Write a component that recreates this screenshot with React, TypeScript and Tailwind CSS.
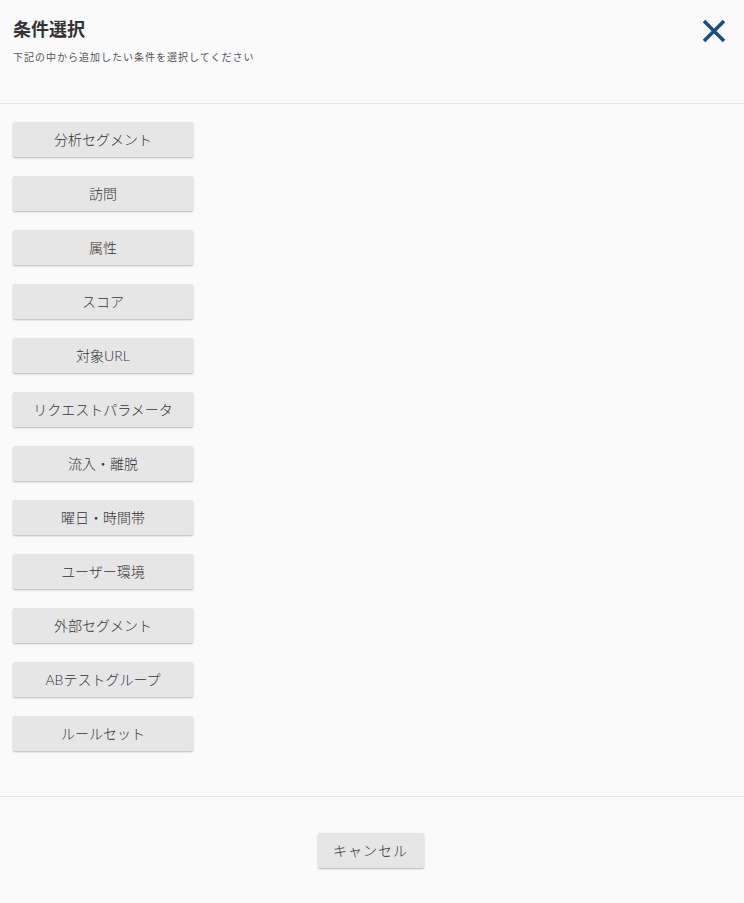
import React from "react";

const conditions = [
  "分析セグメント",
  "訪問",
  "属性",
  "スコア",
  "対象URL",
  "リクエストパラメータ",
  "流入・離脱",
  "曜日・時間帯",
  "ユーザー環境",
  "外部セグメント",
  "ABテストグループ",
  "ルールセット",
];

function GrayButton({ label, className }: { label: string; className?: string }) {
  return (
    <button
      type="button"
      className={
        "h-[35px] bg-[#e6e6e6] text-[14px] font-light text-[#333] rounded-[2px] shadow-[0_1px_2px_rgba(0,0,0,0.28)] " +
        (className ?? "")
      }
    >
      {label}
    </button>
  );
}

export default function App() {
  return (
    <div
      className="min-h-[903px] bg-[#fafafa] text-[#333]"
      style={{ fontFamily: 'Lato, "Noto Sans CJK JP", sans-serif' }}
    >
      {/* ヘッダー */}
      <div className="relative h-[104px] border-b border-[#e3e3e3] px-[13px] pt-[16px]">
        <h2 className="text-[18px] font-bold leading-[26px] text-[#333]">条件選択</h2>
        <p className="mt-[8px] text-[10px] leading-[14px] tracking-[1px] text-[#555]">
          下記の中から追加したい条件を選択してください
        </p>
        <button type="button" className="absolute right-[17px] top-[18px] h-[26px] w-[26px]">
          <svg viewBox="0 0 26 26" className="h-[26px] w-[26px]">
            <path d="M3 3 L23 23 M23 3 L3 23" stroke="#1c4e80" strokeWidth="3.6" strokeLinecap="butt" />
          </svg>
        </button>
      </div>

      {/* 条件一覧 */}
      <div className="flex h-[693px] flex-col gap-[19px] border-b border-[#e3e3e3] px-[13px] pt-[18px]">
        {conditions.map((c) => (
          <GrayButton key={c} label={c} className="w-[180px]" />
        ))}
      </div>

      {/* フッター */}
      <div className="flex justify-center pt-[36px] pb-[35px] pr-[3px]">
        <GrayButton label="キャンセル" className="w-[106px] tracking-[1px]" />
      </div>
    </div>
  );
}
